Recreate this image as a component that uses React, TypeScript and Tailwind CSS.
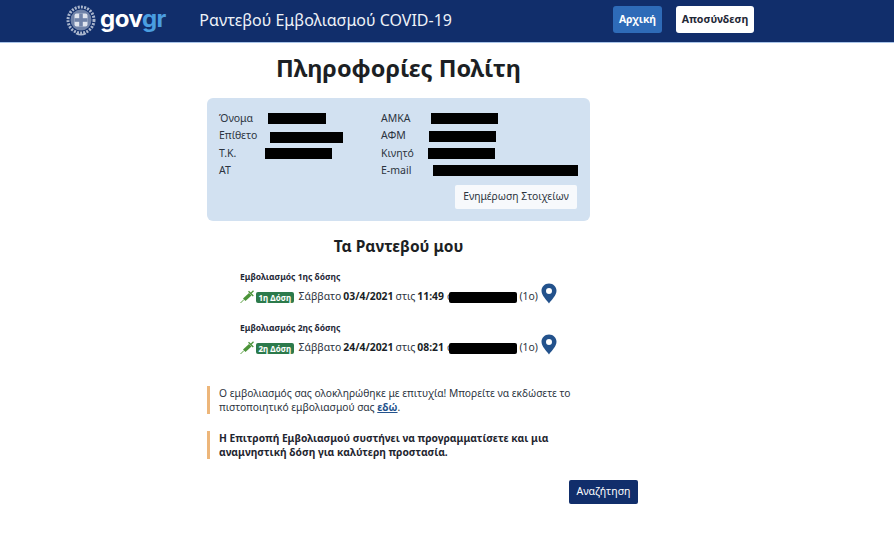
import React from "react";

const font = { fontFamily: '"Noto Sans", sans-serif' };

function Emblem() {
  return (
    <svg width="30" height="32" viewBox="0 0 30 32" className="shrink-0">
      <circle cx="15" cy="15" r="13" fill="none" stroke="#aab6cd" strokeWidth="3" strokeDasharray="2 1.2" />
      <circle cx="15" cy="15" r="10.5" fill="#6f82a8" />
      <rect x="8.5" y="8.5" width="13" height="13" rx="2" fill="#dfe4ee" />
      <rect x="13.2" y="8.5" width="3.6" height="13" fill="#6f82a8" />
      <rect x="8.5" y="13.2" width="13" height="3.6" fill="#6f82a8" />
      <path d="M10 28.5 Q15 31 20 28.5" fill="none" stroke="#aab6cd" strokeWidth="1.5" />
    </svg>
  );
}

function Syringe() {
  return (
    <svg width="15" height="14" viewBox="0 0 15 14" className="shrink-0">
      <path d="M0.5 13 L4 9.5" stroke="#5aa043" strokeWidth="1" />
      <path d="M3 8.5 L9 3 L11.5 5.5 L5.5 11 Z" fill="#4b9338" />
      <path d="M8.5 1.2 L13.3 6" stroke="#4b9338" strokeWidth="1.3" />
      <path d="M11 3.2 L13.5 0.8" stroke="#4b9338" strokeWidth="1.3" />
    </svg>
  );
}

function Pin() {
  return (
    <svg width="16" height="21" viewBox="0 0 16 21" className="shrink-0">
      <path
        fillRule="evenodd"
        d="M8 0.5 C3.6 0.5 0.5 3.8 0.5 7.8 C0.5 12.5 5.6 17 8 20.5 C10.4 17 15.5 12.5 15.5 7.8 C15.5 3.8 12.4 0.5 8 0.5 Z M8 5 A3 3 0 1 1 8 11 A3 3 0 1 1 8 5 Z"
        fill="#23528c"
      />
    </svg>
  );
}

function Field({ label, w, x, dy = 0 }: { label: string; w?: number; x?: number; dy?: number }) {
  return (
    <div className="flex items-center h-[17.4px] text-[10.5px] text-[#2c3440]">
      <span className="whitespace-nowrap w-0">{label}</span>
      {w ? (
        <span className="block bg-black shrink-0 h-[11px]" style={{ width: w, marginLeft: x ?? 0, marginTop: dy }} />
      ) : null}
    </div>
  );
}

function Dose({ title, badge, date, time }: { title: string; badge: string; date: string; time: string }) {
  return (
    <div className="flex flex-col">
      <div className="text-[8.5px] leading-[12px] font-bold text-[#1f2937]">{title}</div>
      <div className="flex items-center mt-[3px] h-[22px] text-[10.4px] text-[#2c3440] whitespace-nowrap">
        <Syringe />
        <span className="ml-[1px] bg-[#2c7a4b] text-white text-[8px] font-bold rounded-[2px] px-[2.5px] h-[11px] leading-[11px]">
          {badge}
        </span>
        <span className="ml-[5px]">Σάββατο</span>
        <b className="ml-[2px] text-[#1a1f27]">{date}</b>
        <span className="ml-[2px]">στις</span>
        <b className="ml-[2px] text-[#1a1f27]">{time}</b>
        <span className="ml-[3px]">σ</span>
        <span className="block bg-black w-[68px] h-[11px] rounded-[2px] -ml-[4px]" />
        <span className="ml-[2px]">(1ο)</span>
        <span className="ml-[3px] -mt-[8px]">
          <Pin />
        </span>
      </div>
    </div>
  );
}

export default function App() {
  return (
    <div style={font} className="w-[894px] h-[548px] bg-white overflow-hidden">
      <header className="h-[43px] bg-[#112e6b] border-b border-[#a9c4e8] flex items-center">
        <div className="ml-[66px]">
          <Emblem />
        </div>
        <div className="ml-[4px] -mt-[4px] text-[24px] leading-none font-bold tracking-[-0.5px]" style={{ fontFamily: '"Inter", sans-serif' }}>
          <span className="text-white">gov</span>
          <span className="text-[#4a9ee0]">gr</span>
        </div>
        <div className="ml-[33.5px] -mt-[2px] text-[16px] text-[#eef2f8] whitespace-nowrap">Ραντεβού Εμβολιασμού COVID-19</div>
        <div className="ml-[161px] -mt-[3px] h-[27px] w-[49px] rounded-[3px] bg-[#2e6bb8] text-white text-[10.4px] font-bold flex items-center justify-center">
          Αρχική
        </div>
        <div className="ml-[14px] -mt-[3px] h-[27px] w-[78px] rounded-[3px] bg-white text-[#1f2937] text-[10.6px] font-bold flex items-center justify-center">
          Αποσύνδεση
        </div>
      </header>

      <main className="ml-[207px] w-[431px]">
        <h1 className="w-[383px] mt-[7px] h-[37px] text-center text-[23.5px] leading-[37px] font-bold text-[#1c1f24]">Πληροφορίες Πολίτη</h1>

        <section className="w-[383px] mt-[11px] h-[123px] rounded-[6px] bg-[#d2e1f1] pl-[12px] pr-[13px] pt-[12px]">
          <div className="grid grid-cols-[162px_1fr]">
            <div>
              <Field label="Όνομα" w={58} x={49} />
              <Field label="Επίθετο" w={73} x={51} dy={2} />
              <Field label="Τ.Κ." w={67} x={46} dy={1} />
              <Field label="ΑΤ" />
            </div>
            <div>
              <Field label="ΑΜΚΑ" w={67} x={50} />
              <Field label="ΑΦΜ" w={67} x={48} />
              <Field label="Κινητό" w={67} x={47} dy={1} />
              <Field label="E-mail" w={145} x={52} />
            </div>
          </div>
          <div className="flex justify-end mt-[5px]">
            <div className="w-[122px] h-[24px] rounded-[2px] bg-[#f7f9fc] text-[10.3px] text-[#2c3440] flex items-center justify-center whitespace-nowrap">
              Ενημέρωση Στοιχείων
            </div>
          </div>
        </section>

        <h2 className="w-[383px] mt-[13px] h-[24px] text-center text-[15.5px] leading-[24px] font-bold text-[#1c1f24]">Τα Ραντεβού μου</h2>

        <div className="ml-[33px] mt-[13px] flex flex-col gap-[14px]">
          <Dose title="Εμβολιασμός 1ης δόσης" badge="1η Δόση" date="03/4/2021" time="11:49" />
          <Dose title="Εμβολιασμός 2ης δόσης" badge="2η Δόση" date="24/4/2021" time="08:21" />
        </div>

        <div className="mt-[28px] w-[383px] h-[28px] border-l-[3px] border-[#edb67a] pl-[9px] text-[10.25px] leading-[14px] text-[#2c3440]">
          <div className="-mt-[1px]">
            Ο εμβολιασμός σας ολοκληρώθηκε με επιτυχία! Μπορείτε να εκδώσετε το
            <br />
            πιστοποιητικό εμβολιασμού σας <span className="font-bold text-[#23528c] underline">εδώ</span>.
          </div>
        </div>
        <div className="mt-[17px] w-[383px] h-[28px] border-l-[3px] border-[#edb67a] pl-[9px] text-[10.25px] leading-[14px] font-bold text-[#1f2630]">
          Η Επιτροπή Εμβολιασμού συστήνει να προγραμματίσετε και μια
          <br />
          αναμνηστική δόση για καλύτερη προστασία.
        </div>

        <div className="flex justify-end mt-[21px]">
          <div className="w-[69px] h-[24px] rounded-[2px] bg-[#112e6b] text-white text-[10.5px] flex items-center justify-center">Αναζήτηση</div>
        </div>
      </main>
    </div>
  );
}
